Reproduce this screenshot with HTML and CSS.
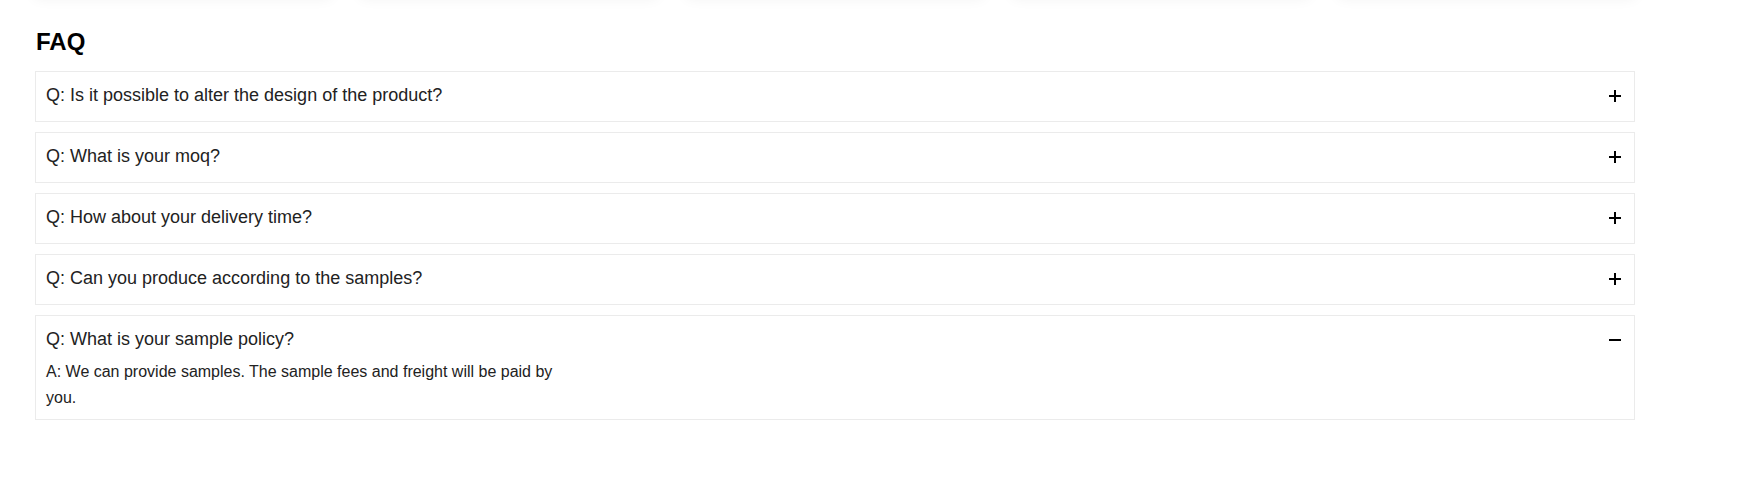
FILE: index.html
```html
<!DOCTYPE html>
<html lang="en">
<head>
<meta charset="utf-8">
<title>FAQ</title>
<link rel="stylesheet" href="styles.css">
</head>
<body>
<div class="page">
  <div class="cards">
    <div class="card"></div>
    <div class="card"></div>
    <div class="card"></div>
    <div class="card"></div>
    <div class="card"></div>
  </div>
  <h2 class="faq-title">FAQ</h2>
  <div class="faq-list">
    <div class="faq-item">
      <div class="faq-q">
        <span class="q-text">Q: Is it possible to alter the design of the product?</span>
        <svg class="icon" width="12" height="12" viewBox="0 0 12 12"><path d="M0 6H12M6 0V12" stroke="#000" stroke-width="2" fill="none"/></svg>
      </div>
    </div>
    <div class="faq-item">
      <div class="faq-q">
        <span class="q-text">Q: What is your moq?</span>
        <svg class="icon" width="12" height="12" viewBox="0 0 12 12"><path d="M0 6H12M6 0V12" stroke="#000" stroke-width="2" fill="none"/></svg>
      </div>
    </div>
    <div class="faq-item">
      <div class="faq-q">
        <span class="q-text">Q: How about your delivery time?</span>
        <svg class="icon" width="12" height="12" viewBox="0 0 12 12"><path d="M0 6H12M6 0V12" stroke="#000" stroke-width="2" fill="none"/></svg>
      </div>
    </div>
    <div class="faq-item">
      <div class="faq-q">
        <span class="q-text">Q: Can you produce according to the samples?</span>
        <svg class="icon" width="12" height="12" viewBox="0 0 12 12"><path d="M0 6H12M6 0V12" stroke="#000" stroke-width="2" fill="none"/></svg>
      </div>
    </div>
    <div class="faq-item open">
      <div class="faq-q">
        <span class="q-text">Q: What is your sample policy?</span>
        <svg class="icon" width="12" height="12" viewBox="0 0 12 12"><path d="M0 6H12" stroke="#000" stroke-width="2" fill="none"/></svg>
      </div>
      <div class="faq-a">A: We can provide samples. The sample fees and freight will be paid by you.</div>
    </div>
  </div>
</div>
</body>
</html>
```

FILE: styles.css
```css
html, body {
  margin: 0;
  padding: 0;
  background: #fff;
}
body {
  font-family: "Liberation Sans", Arial, sans-serif;
  color: #222;
}
.page {
  width: 1600px;
  padding-left: 35px;
}
.cards {
  display: flex;
  gap: 30px;
  height: 97px;
  margin-top: -100px;
}
.card {
  flex: 1;
  background: #fff;
  box-shadow: 0 0 14px rgba(0, 0, 0, 0.07);
}
.faq-title {
  margin: 32.7px 0 17.3px 1px;
  font-size: 24px;
  line-height: 24px;
  font-weight: bold;
  color: #000;
}
.faq-list {
  display: flex;
  flex-direction: column;
  gap: 10px;
}
.faq-item {
  border: 1px solid #ebebeb;
  background: #fff;
}
.faq-q {
  display: flex;
  align-items: center;
  justify-content: space-between;
  padding: 12.5px 13px 13.5px 10px;
  font-size: 18px;
  line-height: 23px;
  color: #222;
}
.icon {
  display: block;
  flex: none;
  margin-top: 1px;
}
.open .faq-q {
  padding-bottom: 7.5px;
}
.faq-a {
  max-width: 520px;
  padding: 0 13px 8.5px 10px;
  font-size: 16px;
  line-height: 25.6px;
  color: #222;
}
```
